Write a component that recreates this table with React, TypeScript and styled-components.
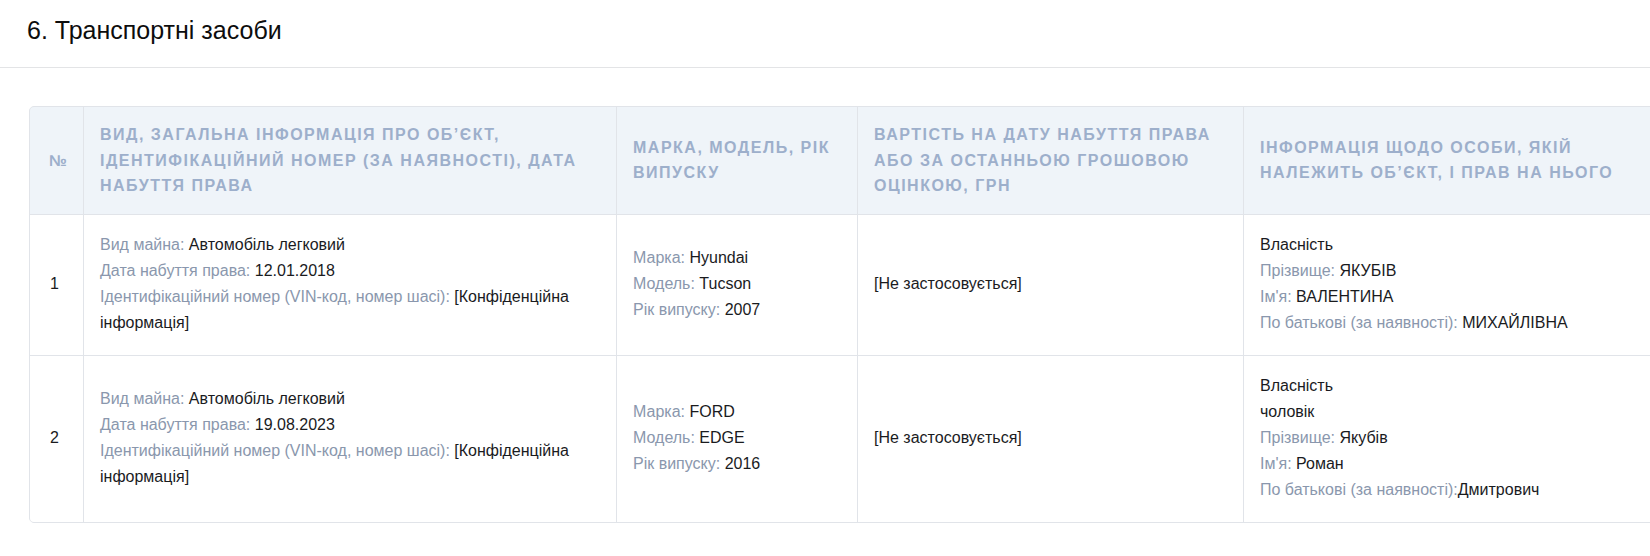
import React from 'react'
import styled, { createGlobalStyle } from 'styled-components'

const GlobalStyle = createGlobalStyle`
  html, body {
    margin : 0;
    padding : 0;
    overflow : hidden;
    background : #ffffff;
  }
  * {
    box-sizing : border-box;
  }
  body {
    font-family : "Liberation Sans", Arial, sans-serif;
    color : #1a1b1e;
  }
`

const TitleBar = styled.div`
  padding : 16px 27px 22px;
  border-bottom : 1px solid #e3e4e6;
`
const Title = styled.h3`
  margin : 0;
  font-size : 25px;
  font-weight : 400;
  line-height : 29px;
  color : #0d0d0d;
`
const Content = styled.div`
  padding : 38px 0 0 29px;
`
const Grid = styled.div`
  display : grid;
  grid-template-columns : 53px 532px 240px 385px 424px;
  gap : 1px;
  width : max-content;
  background : #e1e4e9;
  border : 1px solid #e1e4e9;
  border-radius : 5px;
  overflow : hidden;
`
const HeadCell = styled.div<{ $narrow?: boolean }>`
  display : flex;
  align-items : center;
  padding : 15px 16px 15px ${(p) => (p.$narrow ? '19px' : '16px')};
  background : #eff4f9;
  color : #9dafcb;
  font-size : 16px;
  font-weight : 700;
  line-height : 25.5px;
  letter-spacing : 1.5px;
  text-transform : uppercase;
`
const Cell = styled.div<{ $narrow?: boolean }>`
  display : flex;
  flex-direction : column;
  justify-content : center;
  padding : 17px 16px 19px ${(p) => (p.$narrow ? '20px' : '16px')};
  background : #ffffff;
  font-size : 16px;
  line-height : 26px;
  color : #1a1b1e;
`
const Line = styled.div``
const Label = styled.span`
  color : #8a97ad;
`

type Pair = [string, string]

type Vehicle = {
  no: string
  info: Pair[]
  model: Pair[]
  cost: string
  owner: Pair[]
}

const headers = [
  '№',
  'Вид, загальна інформація про об’єкт, ідентифікаційний номер (за наявності), дата набуття права',
  'Марка, модель, рік випуску',
  'Вартість на дату набуття права або за останньою грошовою оцінкою, грн',
  'Інформація щодо особи, якій належить об’єкт, і прав на нього',
]

const vehicles: Vehicle[] = [
  {
    no: '1',
    info: [
      ['Вид майна: ', 'Автомобіль легковий'],
      ['Дата набуття права: ', '12.01.2018'],
      ['Ідентифікаційний номер (VIN-код, номер шасі): ', '[Конфіденційна інформація]'],
    ],
    model: [
      ['Марка: ', 'Hyundai'],
      ['Модель: ', 'Tucson'],
      ['Рік випуску: ', '2007'],
    ],
    cost: '[Не застосовується]',
    owner: [
      ['', 'Власність'],
      ['Прізвище: ', 'ЯКУБІВ'],
      ["Ім'я: ", 'ВАЛЕНТИНА'],
      ['По батькові (за наявності): ', 'МИХАЙЛІВНА'],
    ],
  },
  {
    no: '2',
    info: [
      ['Вид майна: ', 'Автомобіль легковий'],
      ['Дата набуття права: ', '19.08.2023'],
      ['Ідентифікаційний номер (VIN-код, номер шасі): ', '[Конфіденційна інформація]'],
    ],
    model: [
      ['Марка: ', 'FORD'],
      ['Модель: ', 'EDGE'],
      ['Рік випуску: ', '2016'],
    ],
    cost: '[Не застосовується]',
    owner: [
      ['', 'Власність'],
      ['', 'чоловік'],
      ['Прізвище: ', 'Якубів'],
      ["Ім'я: ", 'Роман'],
      ['По батькові (за наявності):', 'Дмитрович'],
    ],
  },
]

function Lines({ items }: { items: Pair[] }) {
  return (
    <>
      {items.map(([label, value], i) => (
        <Line key={i}>
          {label && <Label>{label}</Label>}
          {value}
        </Line>
      ))}
    </>
  )
}

function App() {
  return (
    <>
      <GlobalStyle />
      <TitleBar>
        <Title>6. Транспортні засоби</Title>
      </TitleBar>
      <Content>
        <Grid>
          {headers.map((h, i) => (
            <HeadCell key={i} $narrow={i === 0}>{h}</HeadCell>
          ))}
          {vehicles.map((v) => (
            <React.Fragment key={v.no}>
              <Cell $narrow>{v.no}</Cell>
              <Cell><Lines items={v.info} /></Cell>
              <Cell><Lines items={v.model} /></Cell>
              <Cell>{v.cost}</Cell>
              <Cell><Lines items={v.owner} /></Cell>
            </React.Fragment>
          ))}
        </Grid>
      </Content>
    </>
  )
}

export default App
